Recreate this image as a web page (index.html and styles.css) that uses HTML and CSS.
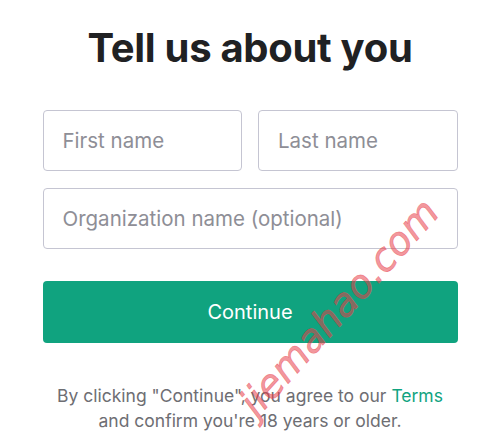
FILE: index.html
```html
<!DOCTYPE html>
<html lang="en">
<head>
    <meta charset="UTF-8">
    <meta name="viewport" content="width=device-width, initial-scale=1.0">
    <title>Tell us about you</title>
    <link rel="stylesheet" href="styles.css">
</head>
<body>
    <div class="page">
        <h1>Tell us about you</h1>

        <form class="form">
            <div class="row">
                <input class="field" type="text" placeholder="First name">
                <input class="field" type="text" placeholder="Last name">
            </div>
            <input class="field" type="text" placeholder="Organization name (optional)">
            <button class="button" type="button">Continue</button>
        </form>

        <p class="terms">By clicking "Continue", you agree to our <a href="#">Terms</a><br>and confirm you're 18 years or older.</p>
    </div>

    <div class="watermark">jiemahao.com</div>
</body>
</html>
```

FILE: styles.css
```css
body {
    margin: 0;
    font-family: Inter, "Noto Sans", sans-serif;
    background: #fff;
    color: #202123;
}
.page {
    width: 415px;
    margin: 0 auto;
    padding-top: 23px;
    display: flex;
    flex-direction: column;
}
h1 {
    margin: 0 0 37px;
    font-size: 40px;
    line-height: 50px;
    font-weight: 700;
    text-align: center;
    letter-spacing: -0.3px;
}
.form {
    display: flex;
    flex-direction: column;
    gap: 17px;
}
.row {
    display: grid;
    grid-template-columns: 1fr 1fr;
    gap: 16px;
}
.field {
    box-sizing: border-box;
    width: 100%;
    height: 61px;
    padding: 0 19px;
    border: 1px solid #c5c5d2;
    border-radius: 4px;
    font-family: inherit;
    font-size: 20.5px;
    color: #202123;
    background: #fff;
}
.field::placeholder {
    color: #8e8e96;
}
.button {
    margin-top: 15px;
    height: 62px;
    border: none;
    border-radius: 4px;
    background: #10a37f;
    color: #fff;
    font-family: inherit;
    font-size: 20px;
    cursor: pointer;
}
.terms {
    margin: 40px 0 0;
    text-align: center;
    font-size: 17.5px;
    line-height: 25px;
    color: #6e6e73;
}
.terms a {
    color: #10a37f;
    text-decoration: none;
}
.watermark {
    position: absolute;
    left: 247px;
    top: 388px;
    transform: rotate(-48deg);
    transform-origin: left center;
    font-family: "DejaVu Sans", sans-serif;
    font-style: italic;
    font-size: 39px;
    line-height: 44px;
    color: rgba(232, 60, 72, 0.55);
    -webkit-text-stroke: 0.6px rgba(232, 60, 72, 0.55);
    pointer-events: none;
}
```
